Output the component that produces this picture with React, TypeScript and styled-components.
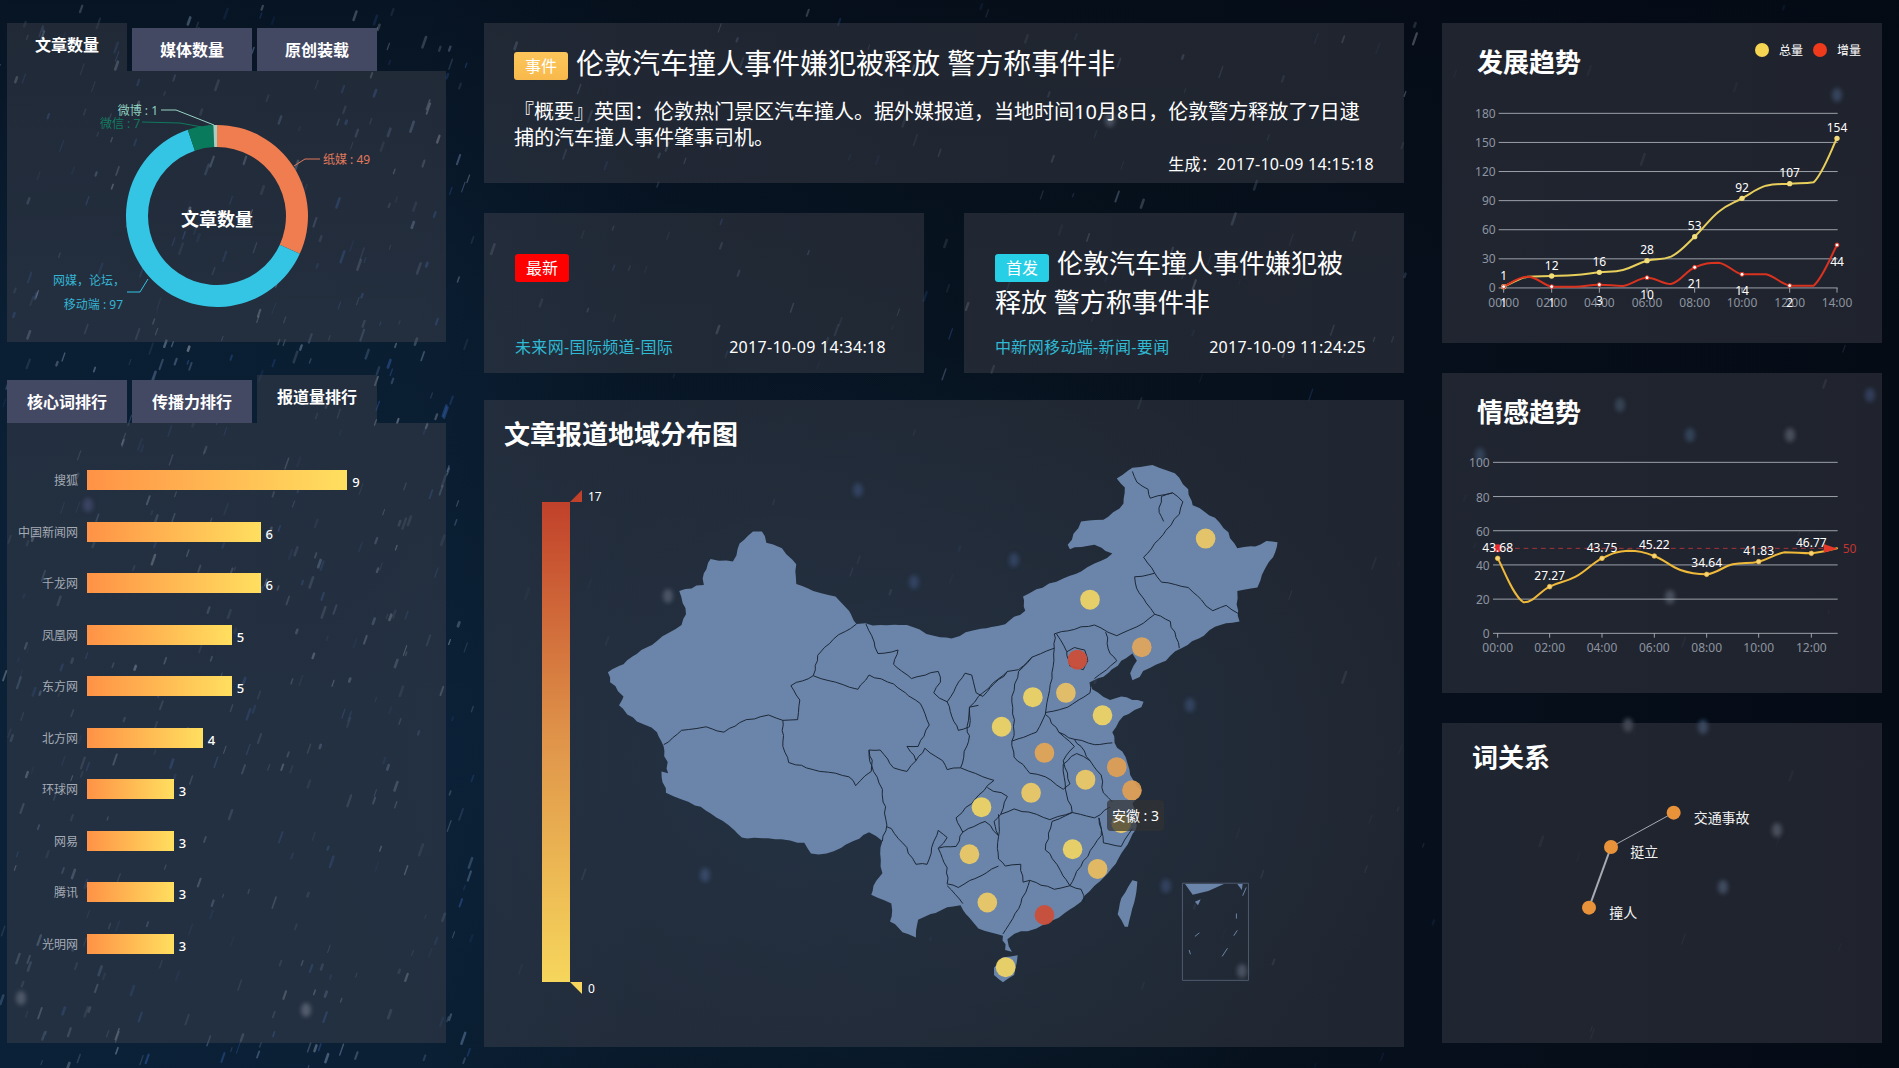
import React from 'react';
import styled, { createGlobalStyle } from 'styled-components';

const GlobalStyle = createGlobalStyle`
    html, body {
        margin: 0;
        padding: 0;
        background: #07121f;
        overflow: hidden;
    }
    * {
        box-sizing: border-box;
    }
`;

// ---- helpers ----
type Pt = [number, number];

const clamp = (v: number, a: number, b: number) => Math.min(Math.max(v, Math.min(a, b)), Math.max(a, b));

// same idea as echarts' smooth line: control points stay inside the segment's y range
const smooth = (pts: Pt[]) => {
    let d = `M${pts[0][0]} ${pts[0][1]}`;
    for (let i = 0; i < pts.length - 1; i++) {
        const p0 = pts[Math.max(i - 1, 0)];
        const p1 = pts[i];
        const p2 = pts[i + 1];
        const p3 = pts[Math.min(i + 2, pts.length - 1)];
        const c1x = p1[0] + (p2[0] - p0[0]) / 5;
        const c1y = clamp(p1[1] + (p2[1] - p0[1]) / 5, p1[1], p2[1]);
        const c2x = p2[0] - (p3[0] - p1[0]) / 5;
        const c2y = clamp(p2[1] - (p3[1] - p1[1]) / 5, p1[1], p2[1]);
        d += ` C${c1x} ${c1y} ${c2x} ${c2y} ${p2[0]} ${p2[1]}`;
    }
    return d;
};

const arc = (cx: number, cy: number, r0: number, r1: number, from: number, to: number) => {
    const at = (r: number, a: number) => {
        const t = ((a - 90) * Math.PI) / 180;
        return `${cx + r * Math.cos(t)} ${cy + r * Math.sin(t)}`;
    };
    const large = to - from > 180 ? 1 : 0;
    return `M${at(r1, from)} A${r1} ${r1} 0 ${large} 1 ${at(r1, to)} L${at(r0, to)} A${r0} ${r0} 0 ${large} 0 ${at(r0, from)} Z`;
};

const seeded = (seed: number) => () => {
    seed = (seed + 0x6d2b79f5) | 0;
    let t = Math.imul(seed ^ (seed >>> 15), 1 | seed);
    t = (t + Math.imul(t ^ (t >>> 7), 61 | t)) ^ t;
    return ((t ^ (t >>> 14)) >>> 0) / 4294967296;
};

// borders in the picture are ragged, so each straight piece gets small steps
const roughen = (s: string, close = false, amount = 5) => {
    const noise = seeded(s.length * 7 + 3);
    const pts = s.trim().split(/\s+/).map((p) => p.split(',').map(Number) as Pt);
    if (close) pts.push(pts[0]);
    let d = `M${pts[0][0]} ${pts[0][1]}`;
    for (let i = 1; i < pts.length; i++) {
        const [ax, ay] = pts[i - 1];
        const [bx, by] = pts[i];
        const steps = Math.max(1, Math.round(Math.hypot(bx - ax, by - ay) / 16));
        for (let k = 1; k < steps; k++) {
            const t = k / steps;
            const x = ax + (bx - ax) * t + (noise() - 0.5) * amount;
            const y = ay + (by - ay) * t + (noise() - 0.5) * amount;
            d += ` L${x.toFixed(1)} ${y.toFixed(1)}`;
        }
        d += ` L${bx} ${by}`;
    }
    return close ? `${d} Z` : d;
};

// ---- rain background ----
const rainColors = ['#9db7d8', '#c9d3e0', '#3c6cc4', '#7d9cc6'];
const regions = [
    { x: 0, y: 0, w: 475, h: 1068, n: 560, o: 0.42 },
    { x: 475, y: 0, w: 945, h: 400, n: 110, o: 0.3 },
    { x: 475, y: 400, w: 945, h: 668, n: 40, o: 0.14 },
    { x: 1420, y: 0, w: 479, h: 1068, n: 26, o: 0.12 },
];
const rand = seeded(42);
const streaks = regions.flatMap((r) =>
    Array.from({ length: r.n }, () => {
        const len = 3 + rand() * 8;
        return {
            x: r.x + rand() * r.w,
            y: r.y + rand() * r.h,
            len,
            w: 1 + rand() * 1.8,
            o: (0.25 + rand() * 0.75) * r.o,
            c: rainColors[Math.floor(rand() * rainColors.length)],
        };
    }),
);
const blobs: [number, number, string][] = [
    [88, 505, '#5a63a8'], [21, 998, '#9aa6b8'], [306, 1010, '#aab6c8'], [668, 596, '#8d9db5'], [858, 490, '#3c62a8'],
    [705, 875, '#4f74b4'], [1166, 886, '#3f62a8'], [1242, 971, '#8d9db5'], [1190, 705, '#3f66a8'], [1014, 560, '#3c62a8'],
    [914, 582, '#3c62a8'], [1790, 435, '#8f9cae'], [1670, 597, '#8f9cae'], [1837, 95, '#4f78b0'], [1777, 830, '#8f9cae'],
    [1723, 887, '#6d8fb8'], [1703, 727, '#5f84b4'], [1628, 725, '#77808f'], [1620, 405, '#50708f'], [1480, 455, '#3f6f9f'],
    [1690, 435, '#3f6f9f'], [1870, 395, '#3f62a8'], [1110, 120, '#8d9db5'],
];

const RainLayer = () => (
    <RainSvg viewBox="0 0 1899 1068">
        <defs>
            <filter id="soft" x="-100%" y="-100%" width="300%" height="300%">
                <feGaussianBlur stdDeviation="2" />
            </filter>
        </defs>
        {streaks.map((s, i) => (
            <line
                key={i}
                x1={s.x}
                y1={s.y}
                x2={s.x - s.len * 0.35}
                y2={s.y + s.len}
                stroke={s.c}
                strokeWidth={s.w}
                strokeOpacity={s.o}
                strokeLinecap="round"
            />
        ))}
        <g filter="url(#soft)">
            {blobs.map(([x, y, c], i) => (
                <ellipse key={i} cx={x} cy={y} rx={5} ry={7} fill={c} fillOpacity={0.5} />
            ))}
        </g>
    </RainSvg>
);

// ---- left column ----
const Donut = () => {
    const cx = 217;
    const cy = 216;
    const total = 154;
    const seg = [
        { v: 49, c: '#ef7d50' },
        { v: 97, c: '#34c5e4' },
        { v: 7, c: '#0a7a5c' },
        { v: 1, c: '#a6cfc4' },
    ];
    let angle = 0;
    return (
        <DonutSvg viewBox="7 71 439 271">
            {seg.map((s) => {
                const from = angle;
                angle += (s.v / total) * 360;
                return <path key={s.c} d={arc(cx, cy, 69, 91, from, angle)} fill={s.c} />;
            })}
            <Leader stroke="#e0795a" d="M294 166 L305 159 L320 159" />
            <Leader stroke="#9ad3c6" d="M161 110 L176 110 L214 125" />
            <Leader stroke="#0e7a5e" d="M142 122 L180 123 L202 127" />
            <Leader stroke="#34c5e4" d="M148 279 L140 292 L127 292" />
            <SmallText x={323} y={164} fill="#e0795a">纸媒 : 49</SmallText>
            <SmallText x={158} y={115} fill="#8fd0c0" textAnchor="end">微博 : 1</SmallText>
            <SmallText x={100} y={128} fill="#127a60">微信 : 7</SmallText>
            <SmallText x={125} y={285} fill="#34b4d2" textAnchor="end">网媒，论坛，</SmallText>
            <SmallText x={123} y={309} fill="#34b4d2" textAnchor="end">移动端 : 97</SmallText>
            <DonutLabel x={217} y={226} textAnchor="middle">文章数量</DonutLabel>
        </DonutSvg>
    );
};

const rankings = [
    { name: '搜狐', value: 9 },
    { name: '中国新闻网', value: 6 },
    { name: '千龙网', value: 6 },
    { name: '凤凰网', value: 5 },
    { name: '东方网', value: 5 },
    { name: '北方网', value: 4 },
    { name: '环球网', value: 3 },
    { name: '网易', value: 3 },
    { name: '腾讯', value: 3 },
    { name: '光明网', value: 3 },
];

const LeftColumn = () => (
    <Column>
        <TabGroup $height={319}>
            <TabRow>
                <Tab $active>文章数量</Tab>
                <Tab>媒体数量</Tab>
                <Tab>原创装载</Tab>
            </TabRow>
            <TabBody>
                <Donut />
            </TabBody>
        </TabGroup>
        <TabGroup $height={668} $top={33}>
            <TabRow>
                <Tab>核心词排行</Tab>
                <Tab>传播力排行</Tab>
                <Tab $active>报道量排行</Tab>
            </TabRow>
            <TabBody>
                <BarList>
                    {rankings.map((r) => (
                        <BarRow key={r.name}>
                            <BarName>{r.name}</BarName>
                            <Bar style={{ width: r.value * 28.93 }} />
                            <BarValue>{r.value}</BarValue>
                        </BarRow>
                    ))}
                </BarList>
            </TabBody>
        </TabGroup>
    </Column>
);

// ---- map ----
const chinaOutline = `40,622 75,600 115,560 150,535 205,490 215,460 200,395 255,378 255,345 270,305 320,312 335,262 365,228 385,228 395,260 430,275 462,320 462,375 500,395 550,410 580,450 597,487 650,490 710,490 770,520 810,528 860,505 930,488 975,450 970,410 1000,390 1060,360 1100,340 1145,310 1170,290 1130,265 1075,278 1070,265 1100,200 1150,195 1195,150 1198,105 1180,80 1215,50 1260,42 1310,65 1340,110 1350,155 1400,190 1430,230 1450,275 1490,270 1515,255 1540,258 1530,300 1505,350 1495,385 1450,395 1452,450 1455,480 1400,495 1375,520 1325,555 1290,590 1255,610 1215,645 1210,625 1225,590 1215,570 1190,590 1150,635 1120,650 1125,670 1165,700 1190,690 1215,700 1240,705 1235,720 1195,745 1170,790 1175,820 1200,860 1210,910 1235,955 1215,990 1225,1050 1210,1090 1190,1130 1160,1185 1130,1220 1100,1265 1050,1310 1000,1340 950,1355 935,1370 945,1405 930,1400 925,1360 870,1340 850,1310 830,1275 800,1280 735,1315 730,1365 700,1350 672,1320 675,1270 630,1245 635,1220 655,1185 650,1130 655,1095 625,1070 590,1095 530,1130 495,1130 480,1100 415,1090 340,1085 310,1050 260,1010 220,985 170,960 160,900 175,905 165,830 150,790 105,760 65,715 75,690 45,650`;

const provinceLines = [
    '165,825 205,785 260,775 300,790 350,755 400,742 432,757 465,755 470,700 450,660 500,632 510,575 545,530 597,487',
    '618,487 645,570 690,560 680,600 720,640 780,620 785,650 770,680 800,705 840,625 855,630 865,680 880,690 935,620 960,615 990,580 1040,555 1040,515 1100,495 1130,490 1160,510 1180,520 1225,495 1265,460 1230,400 1220,355 1265,345 1240,300 1290,225 1320,180 1328,145 1305,120 1280,130 1275,175 1285,200',
    '1215,60 1225,90 1250,110 1255,135 1305,120',
    '1265,345 1280,370 1340,385 1370,420 1395,450 1425,435 1455,460',
    '1265,460 1300,480 1320,555',
    '1155,510 1165,570 1180,590 1130,640',
    '1040,555 1035,640 1020,740 1000,790 945,815',
    '990,580 960,620 945,690 950,790 945,815',
    '935,620 870,690 850,720 845,790 850,800 830,890',
    '800,705 815,760 825,785 850,775 850,720 870,715',
    '500,632 550,650 600,670 625,630 680,655 740,710 760,770 735,830 710,830 730,870 750,835 790,870 800,895 830,890',
    '625,840 630,900 595,940 580,915 550,905 500,895 445,875 432,830 432,757',
    '625,840 635,900 655,950 665,1050 655,1095',
    '625,840 650,840 680,890 710,900 730,870',
    '665,1055 675,1060 700,1100 730,1160 755,1160 780,1065 800,1085 780,1115',
    '780,1115 820,1110 835,1070 820,1030 855,990 890,940 905,925 880,915 830,890',
    '945,815 950,860 985,905 1020,915 1060,950 1075,935 1060,870 1085,830 1050,790 1020,740',
    '890,945 935,970 920,1020 950,1005 1000,1020 1030,1035 1080,1015',
    '920,1020 905,1040 915,1080 885,1040 835,1070',
    '915,1020 915,1145 930,1165 965,1160 970,1210 985,1205 1040,1230 1075,1220 1030,1130 1020,1120 1035,1040',
    '780,1115 800,1170 800,1215 825,1225 915,1165',
    '800,1220 835,1270',
    '985,1205 965,1270 925,1355',
    '1075,1220 1100,1230 1108,1268',
    '1075,1220 1090,1180 1145,1080 1140,1030',
    '1035,1040 1080,1015 1130,1030 1165,1000',
    '1080,1015 1065,950 1060,880 1090,850 1120,870 1145,910 1150,960 1170,985',
    '1085,810 1130,825 1170,820',
    '1050,790 1085,810 1100,830 1120,870',
    '1020,735 1070,720 1120,680 1120,650',
    '1140,1030 1150,1100 1190,1110 1215,1060',
    '1068,565 1075,605 1105,615 1115,590 1108,560 1085,553 1068,565',
    '1045,515 1068,565',
];

const mapDots: [number, number, string][] = [
    [1379, 248, '#eeca66'], [1120, 419, '#f1d564'], [1236, 552, '#e3a75c'], [1092, 587, '#cf4d36'],
    [992, 692, '#f1d564'], [1066, 680, '#ebc264'], [1148, 743, '#f1d564'], [922, 775, '#f1d564'],
    [1018, 848, '#e6a654'], [1180, 888, '#e3a054'], [1110, 923, '#efcb64'], [1214, 953, '#e3a054'],
    [988, 960, '#efcb64'], [877, 1000, '#f1d564'], [1190, 1045, '#efcb64'], [1081, 1118, '#f1d564'],
    [850, 1132, '#efcb64'], [1137, 1173, '#ebbe60'], [890, 1267, '#efcb64'], [1018, 1302, '#cf4d36'],
    [931, 1448, '#f1d564'],
];

const MapChart = () => (
    <MapSvg viewBox="484 452 919 595">
        <defs>
            <linearGradient id="scale" x1="0" y1="0" x2="0" y2="1">
                <stop offset="0" stopColor="#c1412a" />
                <stop offset="0.5" stopColor="#e0954a" />
                <stop offset="1" stopColor="#f6d65c" />
            </linearGradient>
        </defs>
        <rect x={542} y={502} width={28} height={480} fill="url(#scale)" />
        <polygon points="570,502 582,490 582,502" fill="#c1412a" />
        <polygon points="570,982 582,982 582,994" fill="#f6d65c" />
        <ScaleText x={588} y={501}>17</ScaleText>
        <ScaleText x={588} y={993}>0</ScaleText>
        <svg x={590} y={450} width={700} height={560} viewBox="0 0 1568 1568" preserveAspectRatio="none">
            <Land d={roughen(chinaOutline, true, 6)} />
            <Land d={roughen('1182,1300 1190,1255 1215,1205 1226,1208 1222,1250 1205,1335 1198,1335', true, 2)} />
            <Land d={roughen('905,1450 925,1420 958,1415 950,1470 925,1490 905,1470', true, 2)} />
            {provinceLines.map((p) => (
                <Border key={p} d={roughen(p)} />
            ))}
            <InsetFrame x={1327} y={1213} width={148} height={272} />
            <Land d="M1333 1215 L1420 1215 L1385 1235 L1350 1245 Z" />
            <Land d="M1355 1265 L1368 1258 L1362 1275 Z" />
            <Land d="M1450 1215 L1462 1215 L1460 1232 Z" />
            <InsetMark d="M1470 1225 L1462 1248 M1448 1298 L1448 1312 M1450 1345 L1442 1360 M1365 1352 L1355 1362 M1428 1395 L1416 1418 M1342 1400 L1345 1412" />
            {mapDots.map(([x, y, c]) => (
                <ellipse key={`${x}-${y}`} cx={x} cy={y} rx={22} ry={28} fill={c} fillOpacity={0.92} />
            ))}
        </svg>
    </MapSvg>
);

const CenterColumn = () => (
    <Column>
        <EventPanel>
            <HeadLine $size={28} $line={34}>
                <Tag $color="linear-gradient(180deg, #fdc65a, #f8b94c)" $lift={2}>事件</Tag>
                伦敦汽车撞人事件嫌犯被释放 警方称事件非
            </HeadLine>
            <Summary>
                『概要』英国：伦敦热门景区汽车撞人。据外媒报道，当地时间10月8日，伦敦警方释放了7日逮捕的汽车撞人事件肇事司机。
            </Summary>
            <Generated>生成：2017-10-09 14:15:18</Generated>
        </EventPanel>
        <CardRow>
            <Card>
                <HeadLine $size={26} $line={39}>
                    <Tag $color="#f00" $lift={-1}>最新</Tag>
                </HeadLine>
                <CardFoot>
                    <Source>未来网-国际频道-国际</Source>
                    <Stamp>2017-10-09 14:34:18</Stamp>
                </CardFoot>
            </Card>
            <Card>
                <HeadLine $size={26} $line={39}>
                    <Tag $color="#27cfe6" $lift={-1}>首发</Tag>
                    伦敦汽车撞人事件嫌犯被释放 警方称事件非
                </HeadLine>
                <CardFoot>
                    <Source>中新网移动端-新闻-要闻</Source>
                    <Stamp>2017-10-09 11:24:25</Stamp>
                </CardFoot>
            </Card>
        </CardRow>
        <MapPanel>
            <MapTitle>文章报道地域分布图</MapTitle>
            <MapChart />
            <Tooltip>安徽 : 3</Tooltip>
        </MapPanel>
    </Column>
);

// ---- right column (all chart coordinates are in 3x units, like the crops) ----
const growthX = [190, 262, 334, 405, 477, 548, 620, 692, 763, 835, 905, 977, 1048, 1120, 1190];
const growthTotal = [800, 770, 768, 765, 757, 750, 722, 710, 650, 575, 535, 497, 491, 487, 355];
const growthDelta = [800, 770, 800, 800, 794, 798, 773, 792, 742, 728, 763, 763, 797, 797, 675];

const GrowthChart = () => {
    const total = growthX.map((x, i) => [x, growthTotal[i]] as Pt);
    const delta = growthX.map((x, i) => [x, growthDelta[i]] as Pt);
    const ticks = [190, 334, 477, 620, 763, 905, 1048, 1190];
    const hours = ['00:00', '02:00', '04:00', '06:00', '08:00', '10:00', '12:00', '14:00'];
    const totalLabels = ['1', '12', '16', '28', '53', '92', '107', '154'];
    const totalLabelY = [780, 750, 737, 701, 629, 515, 470, 335];
    const deltaLabels = ['1', '1', '3', '10', '21', '14', '2', '44'];
    const deltaLabelY = [860, 860, 855, 837, 804, 825, 860, 737];
    return (
        <ChartSvg viewBox="5 189 1317 780" $height={260}>
            {[180, 150, 120, 90, 60, 30, 0].map((v, i) => (
                <g key={v}>
                    <GridLine x1={175} x2={1192} y1={280 + i * 87.3} y2={280 + i * 87.3} />
                    <AxisText x={166} y={293 + i * 87.3} textAnchor="end">{v}</AxisText>
                </g>
            ))}
            {ticks.map((x, i) => (
                <g key={x}>
                    <GridLine x1={x} x2={x} y1={804} y2={818} />
                    <AxisText x={x} y={860} textAnchor="middle">{hours[i]}</AxisText>
                </g>
            ))}
            <Curve d={smooth(total)} stroke="#e8cf5c" />
            <Curve d={smooth(delta)} stroke="#d9321f" />
            {ticks.map((x, i) => (
                <g key={x}>
                    <circle cx={x} cy={total[i * 2][1]} r={8} fill="#f3dc7a" />
                    <circle cx={x} cy={delta[i * 2][1]} r={6} fill="#fff" stroke="#d9321f" strokeWidth={3} />
                    <ValueText x={x} y={totalLabelY[i]} textAnchor="middle">{totalLabels[i]}</ValueText>
                    <ValueText x={x} y={deltaLabelY[i]} textAnchor="middle">{deltaLabels[i]}</ValueText>
                </g>
            ))}
        </ChartSvg>
    );
};

const moodX = [172, 250, 328, 406, 485, 563, 642, 720, 799, 877, 955, 1033, 1113, 1190];
const moodY = [565, 697, 650, 620, 565, 542, 558, 600, 613, 583, 575, 547, 550, 535];
const moodLabels: [number, string, number][] = [
    [0, '43.68', 546], [2, '27.27', 630], [4, '43.75', 546], [6, '45.22', 537],
    [8, '34.64', 591], [10, '41.83', 555], [12, '46.77', 531],
];

const MoodChart = () => (
    <ChartSvg viewBox="5 189 1317 780" $height={260}>
        {[100, 80, 60, 40, 20, 0].map((v, i) => (
            <g key={v}>
                <GridLine x1={158} x2={1192} y1={277 + i * 102.6} y2={277 + i * 102.6} />
                <AxisText x={148} y={292 + i * 102.6} textAnchor="end">{v}</AxisText>
            </g>
        ))}
        {[0, 2, 4, 6, 8, 10, 12].map((i, n) => (
            <g key={i}>
                <GridLine x1={moodX[i]} x2={moodX[i]} y1={790} y2={803} />
                <AxisText x={moodX[i]} y={846} textAnchor="middle">{`${String(n * 2).padStart(2, '0')}:00`}</AxisText>
            </g>
        ))}
        <DashLine x1={172} x2={1160} y1={535} y2={535} />
        <Curve d={smooth(moodX.map((x, i) => [x, moodY[i]] as Pt))} stroke="#efb93a" />
        <polygon points="1150,522 1192,536 1150,548" fill="#e4392a" />
        <circle cx={172} cy={535} r={12} fill="#e4292a" />
        <LimitText x={1207} y={549}>50</LimitText>
        {moodLabels.map(([i, text, y]) => (
            <g key={text}>
                <circle cx={moodX[i]} cy={moodY[i]} r={7} fill="#f7d47a" stroke="#efb93a" strokeWidth={2} />
                <ValueText x={moodX[i]} y={y} textAnchor="middle">{text}</ValueText>
            </g>
        ))}
    </ChartSvg>
);

const RelationChart = () => (
    <ChartSvg viewBox="5 138 1317 830" $height={276.67}>
        <line x1={700} y1={278} x2={512} y2={381} stroke="#a7abb2" strokeWidth={3} />
        <line x1={512} y1={381} x2={446} y2={563} stroke="#a7abb2" strokeWidth={6} />
        <circle cx={700} cy={278} r={21} fill="#e8923a" />
        <circle cx={512} cy={381} r={21} fill="#e8923a" />
        <circle cx={446} cy={563} r={21} fill="#e8923a" />
        <NodeText x={760} y={309}>交通事故</NodeText>
        <NodeText x={570} y={412}>挺立</NodeText>
        <NodeText x={507} y={595}>撞人</NodeText>
    </ChartSvg>
);

const RightColumn = () => (
    <Column>
        <ChartPanel>
            <PanelHead>
                <PanelTitle>发展趋势</PanelTitle>
                <Legend>
                    <LegendItem $color="#f5d552">总量</LegendItem>
                    <LegendItem $color="#ef3a1c">增量</LegendItem>
                </Legend>
            </PanelHead>
            <GrowthChart />
        </ChartPanel>
        <ChartPanel $top={30}>
            <PanelHead>
                <PanelTitle>情感趋势</PanelTitle>
            </PanelHead>
            <MoodChart />
        </ChartPanel>
        <ChartPanel $top={30}>
            <PanelHead $pad={30} $top={16} $height={43.33}>
                <PanelTitle>词关系</PanelTitle>
            </PanelHead>
            <RelationChart />
        </ChartPanel>
    </Column>
);

export default function App() {
    return (
        <>
            <GlobalStyle />
            <Page>
                <RainLayer />
                <Board>
                    <LeftColumn />
                    <CenterColumn />
                    <RightColumn />
                </Board>
            </Page>
        </>
    );
}

// ---- styles ----
const panelFill = 'rgba(72, 72, 82, 0.4)';

const Page = styled.div`
    position: relative;
    width: 1899px;
    height: 1068px;
    overflow: hidden;
    background:
        linear-gradient(180deg, rgba(4, 10, 20, 0.55) 0%, rgba(4, 10, 20, 0.1) 30%, rgba(4, 10, 20, 0) 70%),
        radial-gradient(560px 420px at 860px 760px, rgba(14, 42, 68, 0.7), rgba(14, 42, 68, 0)),
        linear-gradient(90deg, #0b2137 0%, #0b2035 22%, #081727 34%, #07131f 55%, #060f1b 78%, #050b15 100%);
    font-family: 'Noto Sans', 'Noto Sans CJK SC', sans-serif;
    color: #fff;
`;

const RainSvg = styled.svg`
    position: absolute;
    inset: 0;
    width: 1899px;
    height: 1068px;
    filter: blur(0.6px);
`;

const Board = styled.div`
    position: relative;
    display: grid;
    grid-template-columns: 439px 920px 440px;
    column-gap: 38px;
    padding: 23px 0 0 7px;
`;

const Column = styled.div`
    display: flex;
    flex-direction: column;
`;

const TabGroup = styled.section<{ $height: number; $top?: number }>`
    display: flex;
    flex-direction: column;
    height: ${({ $height }) => $height}px;
    margin-top: ${({ $top }) => $top ?? 0}px;
`;

const TabRow = styled.div`
    display: flex;
    align-items: flex-end;
    gap: 5px;
    height: 48px;
    flex: none;
`;

const Tab = styled.div<{ $active?: boolean }>`
    width: 120px;
    height: ${({ $active }) => ($active ? 48 : 43)}px;
    line-height: ${({ $active }) => ($active ? 44 : 45)}px;
    text-align: center;
    font-size: 16px;
    font-weight: 700;
    background: ${({ $active }) => ($active ? panelFill : '#434863')};
`;

const TabBody = styled.div`
    flex: 1;
    background: ${panelFill};
`;

const DonutSvg = styled.svg`
    display: block;
    width: 439px;
    height: 271px;
`;

const Leader = styled.path`
    fill: none;
    stroke-width: 1;
`;

const SmallText = styled.text`
    font-size: 12px;
`;

const DonutLabel = styled.text`
    font-size: 18px;
    font-weight: 700;
    fill: #fff;
`;

const BarList = styled.div`
    display: flex;
    flex-direction: column;
    gap: 31.55px;
    padding-top: 47px;
`;

const BarRow = styled.div`
    display: flex;
    align-items: center;
    height: 20px;
`;

const BarName = styled.span`
    width: 71px;
    margin-right: 9px;
    text-align: right;
    font-size: 12px;
    color: #a3abb4;
    white-space: nowrap;
`;

const Bar = styled.div`
    height: 20px;
    background: linear-gradient(90deg, #ff9246, #ffdf5f);
`;

const BarValue = styled.span`
    margin-left: 5px;
    padding-top: 4px;
    font-size: 13px;
    font-weight: 500;
`;

const EventPanel = styled.section`
    height: 160px;
    padding: 23px 30px 0;
    background: ${panelFill};
`;

const HeadLine = styled.h2<{ $size: number; $line: number }>`
    margin: 0;
    font-size: ${({ $size }) => $size}px;
    line-height: ${({ $line }) => $line}px;
    font-weight: 400;
`;

const Tag = styled.span<{ $color: string; $lift: number }>`
    display: inline-block;
    width: 54px;
    height: 28px;
    margin-right: 8px;
    border-radius: 3px;
    background: ${({ $color }) => $color};
    font-size: 16px;
    line-height: 28px;
    text-align: center;
    vertical-align: ${({ $lift }) => $lift}px;
`;

const Summary = styled.p`
    margin: 19px 0 0;
    font-size: 20px;
    line-height: 26px;
`;

const Generated = styled.div`
    margin-top: 1px;
    text-align: right;
    font-size: 16px;
    line-height: 24px;
    letter-spacing: 0.3px;
`;

const CardRow = styled.div`
    display: flex;
    gap: 40px;
    margin-top: 30px;
`;

const Card = styled.article`
    display: flex;
    flex-direction: column;
    width: 440px;
    height: 160px;
    padding: 31px 38px 14px 31px;
    background: ${panelFill};
`;

const CardFoot = styled.div`
    display: flex;
    justify-content: space-between;
    margin-top: auto;
    font-size: 16px;
    line-height: 24px;
`;

const Source = styled.span`
    color: #2fb9d2;
    letter-spacing: 0.35px;
`;

const Stamp = styled.span`
    letter-spacing: 0.3px;
`;

const MapPanel = styled.section`
    position: relative;
    height: 647px;
    margin-top: 27px;
    background: ${panelFill};
`;

const MapTitle = styled.h2`
    margin: 0;
    height: 52px;
    padding: 16px 0 0 20px;
    font-size: 26px;
    line-height: 36px;
    font-weight: 700;
`;

const MapSvg = styled.svg`
    display: block;
    width: 919px;
    height: 595px;
`;

const ScaleText = styled.text`
    font-size: 12px;
    fill: #fff;
`;

const Land = styled.path`
    fill: #6a85a9;
`;

const Border = styled.path`
    fill: none;
    stroke: #1d2838;
    stroke-width: 1;
    stroke-linejoin: round;
    vector-effect: non-scaling-stroke;
`;

const InsetFrame = styled.rect`
    fill: none;
    stroke: #4d5a6e;
    stroke-width: 1;
    vector-effect: non-scaling-stroke;
`;

const InsetMark = styled.path`
    fill: none;
    stroke: #6a85a9;
    stroke-width: 1;
    vector-effect: non-scaling-stroke;
`;

const Tooltip = styled.div`
    position: absolute;
    left: 623px;
    top: 400px;
    width: 57px;
    height: 31px;
    border-radius: 4px;
    background: rgba(50, 50, 50, 0.7);
    font-size: 14px;
    line-height: 31px;
    text-align: center;
    white-space: nowrap;
`;

const ChartPanel = styled.section<{ $top?: number }>`
    height: 320px;
    margin-top: ${({ $top }) => $top ?? 0}px;
    background: ${panelFill};
`;

const PanelHead = styled.header<{ $pad?: number; $top?: number; $height?: number }>`
    display: flex;
    justify-content: space-between;
    height: ${({ $height }) => $height ?? 60}px;
    padding: ${({ $top }) => $top ?? 21}px 21px 0 ${({ $pad }) => $pad ?? 35}px;
`;

const PanelTitle = styled.h3`
    margin: 0;
    font-size: 26px;
    line-height: 36px;
    font-weight: 700;
`;

const Legend = styled.div`
    display: flex;
    gap: 10px;
    margin-top: -1px;
`;

const LegendItem = styled.span<{ $color: string }>`
    display: flex;
    align-items: center;
    height: 14px;
    font-size: 12px;
    &::before {
        content: '';
        width: 14px;
        height: 14px;
        margin-right: 10px;
        border-radius: 50%;
        background: ${({ $color }) => $color};
    }
`;

const ChartSvg = styled.svg<{ $height: number }>`
    display: block;
    width: 439px;
    height: ${({ $height }) => $height}px;
`;

const GridLine = styled.line`
    stroke: #b5bac2;
    stroke-width: 2.5;
`;

const DashLine = styled.line`
    stroke: #a8323a;
    stroke-width: 3;
    stroke-dasharray: 14 12;
`;

const AxisText = styled.text`
    font-size: 36px;
    fill: #8d94a0;
`;

const ValueText = styled.text`
    font-size: 36px;
    fill: #fff;
`;

const LimitText = styled.text`
    font-size: 36px;
    fill: #c23531;
`;

const NodeText = styled.text`
    font-size: 42px;
    fill: #f2f2f2;
`;

const Curve = styled.path`
    fill: none;
    stroke-width: 6;
    stroke-linecap: round;
`;
